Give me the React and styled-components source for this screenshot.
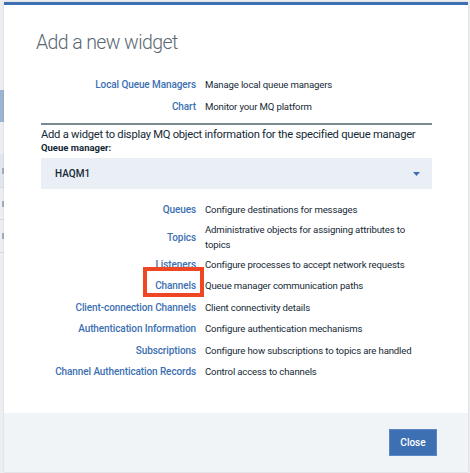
import React from "react"
import styled, { createGlobalStyle } from "styled-components"

const GlobalStyle = createGlobalStyle`
  html, body {
    margin: 0;
    padding: 0;
    background: #eceef1;
    font-family: Roboto, "Open Sans", sans-serif;
  }
`

const Page = styled.div`
  display: flex;
  width: 470px;
  height: 473px;
  overflow: hidden;
  background: #eceef1;
`

const BackStrip = styled.div`
  width: 4px;
  flex-shrink: 0;
  display: flex;
  flex-direction: column;
  padding-top: 90px;
  overflow: hidden;
`

const BackBlock = styled.div`
  height: ${(p) => p.h}px;
  flex-shrink: 0;
  display: flex;
  justify-content: flex-end;
  align-items: center;
  background: ${(p) => p.bg || "transparent"};
  border-bottom: ${(p) => (p.line ? "1px solid #d9dde2" : "none")};
`

const BackGlyph = styled.span`
  width: 2px;
  height: 6px;
  background: #a3b0c2;
`

const Modal = styled.div`
  width: 464px;
  height: 470px;
  margin-top: 2px;
  flex-shrink: 0;
  background: #fff;
  border-top: 3px solid #3d70b2;
  box-sizing: border-box;
  display: flex;
  flex-direction: column;
  box-shadow: 0 0 2px rgba(0, 0, 0, 0.12);
`

const Title = styled.h2`
  margin: 26px 0 0 32px;
  font-size: 19.5px;
  line-height: 24px;
  font-weight: 300;
  letter-spacing: -0.6px;
  color: #5a6872;
`

const Content = styled.div`
  margin: 19px 0 0 37px;
  width: 391px;
`

const WidgetList = styled.div`
  display: grid;
  grid-template-columns: 155px 227px;
  column-gap: 9px;
`

const Row = styled.div`
  display: contents;
`

const Label = styled.div`
  display: flex;
  justify-content: flex-end;
  align-items: center;
  min-height: 21.5px;
`

const LinkText = styled.span`
  position: relative;
  font-size: 10px;
  line-height: 15px;
  font-weight: 500;
  letter-spacing: -0.1px;
  color: #3d70b2;
  white-space: nowrap;
`

const Highlight = styled.span`
  position: absolute;
  top: -11px;
  bottom: -4px;
  left: -12px;
  right: -8px;
  border: 4px solid #ef4624;
`

const Desc = styled.div`
  display: flex;
  align-items: center;
  padding: 1.5px 0;
  font-size: 9.6px;
  line-height: 15px;
  letter-spacing: -0.15px;
  color: #152935;
`

const Rule = styled.div`
  height: 2px;
  background: #7d8990;
  margin-top: 6px;
`

const Intro = styled.p`
  margin: 3.5px 0 0 0;
  font-size: 11.2px;
  line-height: 12px;
  letter-spacing: -0.25px;
  color: #152935;
  white-space: nowrap;
`

const FieldLabel = styled.div`
  margin-top: 1px;
  font-size: 9.5px;
  line-height: 11px;
  font-weight: 700;
  color: #152935;
`

const Select = styled.div`
  margin-top: 5.5px;
  height: 31px;
  background: #eaeff6;
  display: flex;
  align-items: center;
  justify-content: space-between;
  padding: 0 12px 0 14px;
  font-size: 10px;
  font-weight: 500;
  color: #152935;
`

const ObjectList = styled(WidgetList)`
  margin-top: 10px;
`

const Footer = styled.div`
  margin-top: auto;
  height: 59px;
  background: #f1f4f7;
  display: flex;
  justify-content: flex-end;
  align-items: center;
  padding-right: 31px;
`

const Button = styled.button`
  width: 48px;
  height: 27px;
  padding: 0;
  background: #3d70b2;
  border: 1px solid #5b87c4;
  color: #fff;
  font-family: inherit;
  font-size: 10px;
  font-weight: 500;
  cursor: pointer;
`

const topWidgets = [
  ["Local Queue Managers", "Manage local queue managers"],
  ["Chart", "Monitor your MQ platform"],
]

const objectWidgets = [
  ["Queues", "Configure destinations for messages"],
  ["Topics", "Administrative objects for assigning attributes to topics"],
  ["Listeners", "Configure processes to accept network requests"],
  ["Channels", "Queue manager communication paths", true],
  ["Client-connection Channels", "Client connectivity details"],
  ["Authentication Information", "Configure authentication mechanisms"],
  ["Subscriptions", "Configure how subscriptions to topics are handled"],
  ["Channel Authentication Records", "Control access to channels"],
]

const renderRows = (rows) =>
  rows.map(([name, desc, marked]) => (
    <Row key={name}>
      <Label>
        <LinkText>
          {name}
          {marked && <Highlight />}
        </LinkText>
      </Label>
      <Desc>{desc}</Desc>
    </Row>
  ))

const App = () => (
  <Page>
    <GlobalStyle />
    <BackStrip>
      <BackBlock h={32} bg="#9fb3d2" />
      <BackBlock h={32} />
      <BackBlock h={33} bg="#e2e7ee" line><BackGlyph /></BackBlock>
      <BackBlock h={31} line><BackGlyph /></BackBlock>
      <BackBlock h={32} line><BackGlyph /></BackBlock>
    </BackStrip>
    <Modal>
      <Title>Add a new widget</Title>
      <Content>
        <WidgetList>{renderRows(topWidgets)}</WidgetList>
        <Rule />
        <Intro>Add a widget to display MQ object information for the specified queue manager</Intro>
        <FieldLabel>Queue manager:</FieldLabel>
        <Select>
          HAQM1
          <svg width="7" height="4" viewBox="0 0 7 4">
            <polygon points="0,0 7,0 3.5,4" fill="#3d70b2" />
          </svg>
        </Select>
        <ObjectList>{renderRows(objectWidgets)}</ObjectList>
      </Content>
      <Footer>
        <Button>Close</Button>
      </Footer>
    </Modal>
  </Page>
)

export default App
